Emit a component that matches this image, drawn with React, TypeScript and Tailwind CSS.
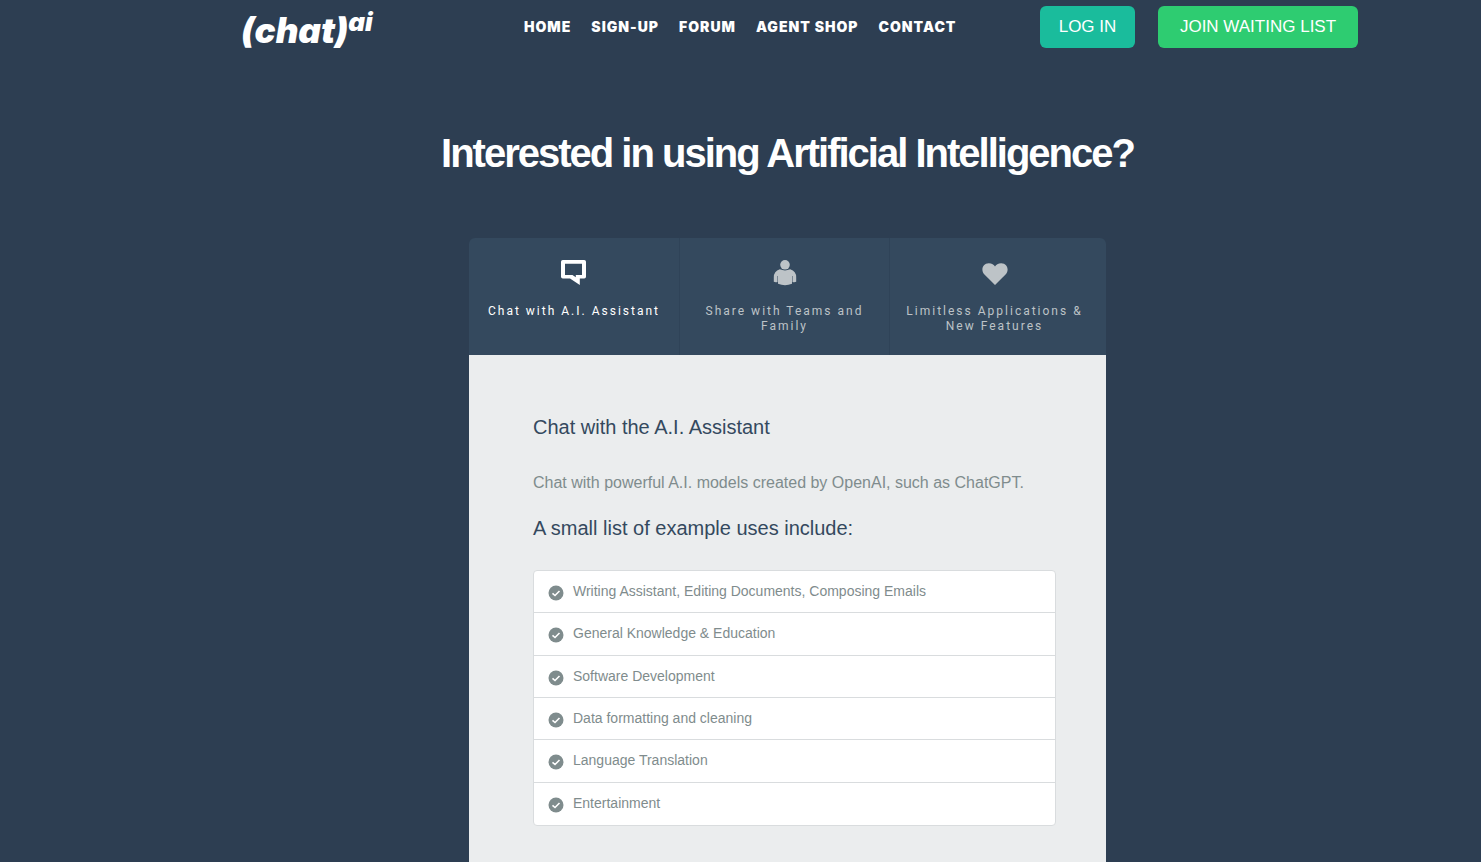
import { useState } from "react";
import type { ReactNode } from "react";

const navLinks = ["Home", "Sign-up", "Forum", "Agent Shop", "Contact"];

const uses = [
  "Writing Assistant, Editing Documents, Composing Emails",
  "General Knowledge & Education",
  "Software Development",
  "Data formatting and cleaning",
  "Language Translation",
  "Entertainment",
];

function ChatIcon() {
  return (
    <svg viewBox="0 0 26 26" className="size-[26px]" fill="currentColor" fillRule="evenodd" aria-hidden="true">
      <path d="M1.800 0H23.200Q25 0 25 1.800V16.700Q25 18.500 23.200 18.500H18.800V25L9 18.500H1.800Q0 18.500 0 16.700V1.800Q0 0 1.800 0ZM4 3.700V14.900H11.500L14.800 17.200V14.900H21V3.700Z" />
    </svg>
  );
}

function PersonIcon() {
  return (
    <svg viewBox="0 0 26 26" className="size-[26px]" fill="currentColor" aria-hidden="true">
      <circle cx="13" cy="4.8" r="4.800" />
      <path d="M7.800 9.300Q13 11.600 18.200 9.300Q24.200 11 24.200 17.500V21.800Q22.500 22.600 20.500 22V16H20V23.800Q13 26.600 6 23.800V16H5.500V22Q3.500 22.600 1.800 21.800V17.500Q1.800 11 7.800 9.300Z" />
    </svg>
  );
}

function HeartIcon() {
  return (
    <svg viewBox="0 0 26 26" className="size-[26px]" fill="currentColor" aria-hidden="true">
      <path d="M13 25L2.200 14.200C-1.300 10.500.3 3.200 6.800 3.200C9.800 3.200 12 4.800 13 6.600C14 4.800 16.200 3.200 19.200 3.200C25.700 3.200 27.300 10.500 23.800 14.200Z" />
    </svg>
  );
}

function CheckIcon() {
  return (
    <svg viewBox="0 0 16 16" className="mt-1 size-4 shrink-0" aria-hidden="true">
      <circle cx="8" cy="8" r="7.500" fill="#7f8c8d" />
      <path d="M4.500 8.400L7 10.500L11.500 6" fill="none" stroke="#fff" strokeWidth="1.600" />
    </svg>
  );
}

const tabs: { label: string; icon: ReactNode }[] = [
  { label: "Chat with A.I. Assistant", icon: <ChatIcon /> },
  { label: "Share with Teams and Family", icon: <PersonIcon /> },
  { label: "Limitless Applications & New Features", icon: <HeartIcon /> },
];

export default function App() {
  const [active, setActive] = useState(0);

  return (
    <div className="min-h-screen bg-[#2d3e52] font-['Liberation_Sans',Arial,sans-serif]">
      <header className="mx-auto flex max-w-[1235px] items-start pt-1.5 pl-[118px]">
        <a
          href="#"
          className="flex h-12 w-[283px] shrink-0 items-start font-['Inter',sans-serif] font-black text-white italic"
        >
          <span className="text-[35px] leading-12">(chat)</span>
          <span className="text-[26px] leading-8">ai</span>
        </a>
        <nav className="flex h-[42px] grow items-center gap-5 font-['Inter',sans-serif] text-sm font-black tracking-[1px] whitespace-nowrap text-white uppercase">
          {navLinks.map((link) => (
            <a key={link} href="#">
              {link}
            </a>
          ))}
        </nav>
        <div className="flex shrink-0 gap-[23px] text-[17px] leading-[42px] text-white">
          <button type="button" className="w-[95px] rounded-md bg-[#1abc9c]">
            LOG IN
          </button>
          <button type="button" className="w-[200px] rounded-md bg-[#2ecc71]">
            JOIN WAITING LIST
          </button>
        </div>
      </header>

      <main className="pl-[94px]">
        <h1 className="pt-[75px] text-center text-[40px] leading-12 font-bold tracking-[-2px] text-white">
          Interested in using Artificial Intelligence?
        </h1>

        <section className="mx-auto mt-[61px] max-w-[637px]">
          <div
            role="tablist"
            className="grid h-[117px] grid-cols-[211px_210px_1fr] overflow-hidden rounded-t-md bg-[#34495e] pr-[7px]"
          >
            {tabs.map((tab, index) => (
              <button
                key={tab.label}
                type="button"
                role="tab"
                id={`tab-${index}`}
                aria-selected={active === index}
                onClick={() => setActive(index)}
                className={`flex flex-col items-center border-r border-[#2f4358] px-3 pt-[22px] font-['Roboto',sans-serif] text-xs leading-[15px] tracking-[2px] last:border-r-0 ${
                  active === index ? "text-white" : "text-[#bdc3c7]"
                }`}
              >
                {tab.icon}
                <span className="mt-[18px]">{tab.label}</span>
              </button>
            ))}
          </div>

          <div role="tabpanel" aria-labelledby={`tab-${active}`} className="bg-[#ebedee] pt-[60px] pr-[50px] pb-16 pl-16">
            <h2 className="text-xl leading-6 text-[#34495e]">Chat with the A.I. Assistant</h2>
            <p className="mt-8 text-base leading-6 text-[#7f8c8d]">
              Chat with powerful A.I. models created by OpenAI, such as ChatGPT.
            </p>
            <h2 className="mt-[21px] text-xl leading-6 text-[#34495e]">A small list of example uses include:</h2>
            <ul className="mt-[30px] grid h-64 grid-rows-6 divide-y divide-[#d9dcde] rounded-sm border border-[#d9dcde] bg-white">
              {uses.map((use) => (
                <li key={use} className="flex gap-[9px] px-[14px] pt-[10px] text-sm leading-[21px] text-[#7f8c8d]">
                  <CheckIcon />
                  {use}
                </li>
              ))}
            </ul>
          </div>
        </section>
      </main>
    </div>
  );
}
